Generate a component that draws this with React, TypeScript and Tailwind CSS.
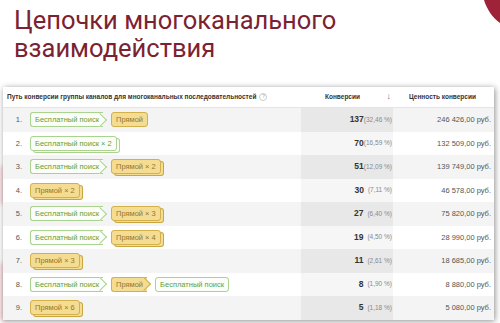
import React from "react";

type Pill = { kind: "g" | "y"; label: string; arrow?: boolean; stack?: boolean };

const G = (label: string, arrow = false, stack = false): Pill => ({ kind: "g", label, arrow, stack });
const Y = (label: string, arrow = false, stack = false): Pill => ({ kind: "y", label, arrow, stack });

const rows: { path: Pill[]; conv: string; pct: string; value: string; tight?: boolean }[] = [
  { path: [G("Бесплатный поиск", true), Y("Прямой")], conv: "137", pct: "(32,46 %)", value: "246 426,00 руб.", tight: true },
  { path: [G("Бесплатный поиск × 2", false, true)], conv: "70", pct: "(16,59 %)", value: "132 509,00 руб.", tight: true },
  { path: [G("Бесплатный поиск", true), Y("Прямой × 2", false, true)], conv: "51", pct: "(12,09 %)", value: "139 749,00 руб.", tight: true },
  { path: [Y("Прямой × 2", false, true)], conv: "30", pct: "(7,11 %)", value: "46 578,00 руб." },
  { path: [G("Бесплатный поиск", true), Y("Прямой × 3", false, true)], conv: "27", pct: "(6,40 %)", value: "75 820,00 руб." },
  { path: [G("Бесплатный поиск", true), Y("Прямой × 4", false, true)], conv: "19", pct: "(4,50 %)", value: "28 990,00 руб." },
  { path: [Y("Прямой × 3", false, true)], conv: "11", pct: "(2,61 %)", value: "18 685,00 руб." },
  { path: [G("Бесплатный поиск", true), Y("Прямой", true), G("Бесплатный поиск")], conv: "8", pct: "(1,90 %)", value: "8 880,00 руб." },
  { path: [Y("Прямой × 6", false, true)], conv: "5", pct: "(1,18 %)", value: "5 080,00 руб." },
];

function Chip({ p }: { p: Pill }) {
  const green = p.kind === "g";
  const box = green
    ? "bg-[#fbfdf8] border-[#a9d38f] text-[#5f9f3c]"
    : "bg-[#f4dc92] border-[#d2b04c] text-[#96772a]";
  const stack = p.stack
    ? green
      ? "shadow-[3px_2px_0_-1px_#fbfdf8,3px_2px_0_0_#a9d38f]"
      : "shadow-[3px_2px_0_-1px_#f4dc92,3px_2px_0_0_#c9a640]"
    : "";
  return (
    <div
      className={`relative flex items-center h-[15px] border px-[4px] text-[7.5px] leading-none whitespace-nowrap ${box} ${stack} ${
        p.arrow ? "rounded-l-[3px] border-r-0 mr-[4px]" : "rounded-[3px]"
      }`}
    >
      <span className="relative z-10">{p.label}</span>
      {p.arrow && (
        <span
          className={`absolute right-[-2px] top-[1.5px] w-[10px] h-[10px] rotate-45 border-t border-r ${
            green ? "bg-[#fbfdf8] border-[#a9d38f]" : "bg-[#f4dc92] border-[#d2b04c]"
          }`}
        />
      )}
    </div>
  );
}

export default function App() {
  return (
    <div className="relative w-[500px] h-[323px] overflow-hidden bg-white font-['Liberation_Sans',Arial,sans-serif]">
      {/* slide corner decoration */}
      <svg className="absolute top-0 right-0" width="16" height="24" viewBox="0 0 16 24">
        <path d="M0 0 H16 V23 C9 18 3 10 0 0 Z" fill="#9e2338" />
      </svg>
      <div className="absolute left-0 top-[165px] w-[8px] h-[40px] rounded-full bg-[#f3d3d8] blur-[2px]" />
      <div className="absolute left-0 top-[262px] w-[8px] h-[60px] rounded-full bg-[#f3d3d8] blur-[2px]" />

      <h1 className="pl-[14px] pt-[6px] text-[25.5px] leading-[28px] text-[#7b2232] font-['Roboto','Noto_Sans',sans-serif] font-normal">
        Цепочки многоканального
        <br />
        взаимодействия
      </h1>

      <div className="relative mt-[25px] ml-[3px] w-[491px] bg-white shadow-[1px_1px_6px_rgba(0,0,0,0.45)]">
        <div className="grid grid-cols-[298px_92px_101px] h-[21px] items-center border-b border-[#e4e4e4] text-[6.5px] font-bold text-[#333]">
          <div className="flex items-center gap-[3px] pl-[4px]">
            Путь конверсии группы каналов для многоканальных последовательностей
            <span className="flex items-center justify-center w-[8px] h-[8px] rounded-full border border-[#ccc] text-[5px] text-[#bbb]">?</span>
          </div>
          <div className="flex items-center justify-between pl-[24px] pr-[2px]">
            <span>Конверсии</span>
            <span className="text-[9px] font-normal text-[#777]">↓</span>
          </div>
          <div className="pl-[16px]">Ценность конверсии</div>
        </div>

        {rows.map((r, i) => {
          const odd = i % 2 === 0;
          return (
            <div
              key={i}
              className={`grid grid-cols-[298px_92px_101px] h-[23.5px] items-center ${odd ? "bg-[#f4f4f4]" : "bg-white"}`}
            >
              <div className="flex items-center h-full">
                <span className="w-[19px] text-right text-[7.5px] text-[#555]">{i + 1}.</span>
                <div className="flex items-center gap-[4px] pl-[8px]">
                  {r.path.map((p, j) => (
                    <Chip key={j} p={p} />
                  ))}
                </div>
              </div>
              <div className={`flex items-center justify-end h-full pr-[1px] ${odd ? "bg-[#e8e8e8]" : "bg-[#f6f6f6]"}`}>
                <span className="text-[8.5px] font-bold text-[#333]">{r.conv}</span>
                <span className={`text-[6.5px] text-[#888] ${r.tight ? "" : "ml-[4px]"}`}>{r.pct}</span>
              </div>
              <div className="text-right pr-[3px] text-[7.5px] text-[#555]">{r.value}</div>
            </div>
          );
        })}
      </div>
    </div>
  );
}
